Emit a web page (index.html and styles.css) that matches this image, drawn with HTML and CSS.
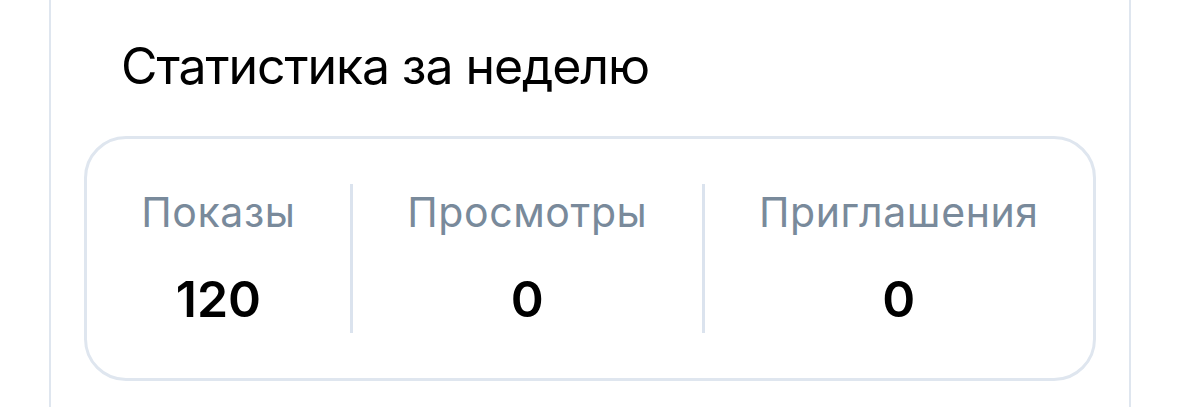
FILE: index.html
```html
<!DOCTYPE html>
<html lang="ru">
<head>
    <meta charset="utf-8" />
    <meta content="width=device-width, initial-scale=1.0" name="viewport" />
    <title>Статистика за неделю</title>
    <link rel="stylesheet" href="styles.css">
</head>
<body>
    <div class="panel">
        <h2 class="stats-title">Статистика за неделю</h2>
        <div class="stats-card">
            <div class="stat-item">
                <div class="stat-label">Показы</div>
                <div class="stat-value">120</div>
            </div>
            <div class="stat-divider"></div>
            <div class="stat-item">
                <div class="stat-label">Просмотры</div>
                <div class="stat-value">0</div>
            </div>
            <div class="stat-divider"></div>
            <div class="stat-item">
                <div class="stat-label">Приглашения</div>
                <div class="stat-value">0</div>
            </div>
        </div>
    </div>
</body>
</html>
```

FILE: styles.css
```css
/* Weekly stats block inside the side panel */
body {
    margin: 0;
    background: #ffffff;
    font-family: Inter, "Noto Sans", "Liberation Sans", sans-serif;
    color: #000000;
}

.panel {
    width: 1082px;
    min-height: 407px;
    margin-left: 49px;
    border-left: 2px solid #dfe6ef;
    border-right: 2px solid #dfe6ef;
    padding: 36px 33px 0 33px;
    box-sizing: border-box;
}

.stats-title {
    margin: 0 0 40px 37px;
    font-size: 50px;
    font-weight: 400;
    line-height: 60px;
    letter-spacing: -1.1px;
}

.stats-card {
    display: flex;
    justify-content: space-evenly;
    align-items: center;
    height: 245px;
    box-sizing: border-box;
    padding: 45px 0;
    border: 3px solid #dfe6ef;
    border-radius: 42px;
}

.stat-item {
    display: flex;
    flex-direction: column;
    align-items: center;
}

.stat-label {
    font-size: 41px;
    line-height: 48px;
    letter-spacing: 0.6px;
    color: #798a9b;
}

.stat-value {
    margin-top: 33px;
    font-size: 50px;
    font-weight: 600;
    line-height: 60px;
}

.stat-divider {
    align-self: stretch;
    width: 3px;
    background: #dbe3ee;
}
```
